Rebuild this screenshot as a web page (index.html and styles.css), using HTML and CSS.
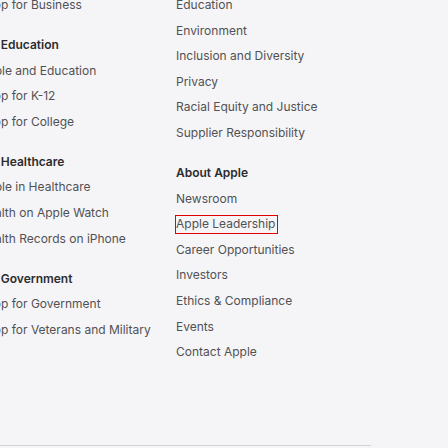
FILE: index.html
```html
<!DOCTYPE html>
<html lang="en">
<head>
<meta charset="utf-8">
<title>Footer directory</title>
<link rel="stylesheet" href="styles.css">
</head>
<body>
<footer class="footer">
  <div class="directory">
    <div class="column column-left">
      <section class="section">
        <ul class="list">
          <li><a href="#">Shop for Business</a></li>
        </ul>
      </section>
      <section class="section">
        <h3 class="title">For Education</h3>
        <ul class="list">
          <li><a href="#">Apple and Education</a></li>
          <li><a href="#">Shop for K-12</a></li>
          <li><a href="#">Shop for College</a></li>
        </ul>
      </section>
      <section class="section">
        <h3 class="title">For Healthcare</h3>
        <ul class="list">
          <li><a href="#">Apple in Healthcare</a></li>
          <li><a href="#">Health on Apple Watch</a></li>
          <li><a href="#">Health Records on iPhone</a></li>
        </ul>
      </section>
      <section class="section">
        <h3 class="title">For Government</h3>
        <ul class="list">
          <li><a href="#">Shop for Government</a></li>
          <li><a href="#">Shop for Veterans and Military</a></li>
        </ul>
      </section>
    </div>
    <div class="column column-right">
      <section class="section">
        <ul class="list">
          <li><a href="#">Education</a></li>
          <li><a href="#">Environment</a></li>
          <li><a href="#">Inclusion and Diversity</a></li>
          <li><a href="#">Privacy</a></li>
          <li><a href="#">Racial Equity and Justice</a></li>
          <li><a href="#">Supplier Responsibility</a></li>
        </ul>
      </section>
      <section class="section">
        <h3 class="title">About Apple</h3>
        <ul class="list">
          <li><a href="#">Newsroom</a></li>
          <li><a href="#" class="focused">Apple Leadership</a></li>
          <li><a href="#">Career Opportunities</a></li>
          <li><a href="#">Investors</a></li>
          <li><a href="#">Ethics &amp; Compliance</a></li>
          <li><a href="#">Events</a></li>
          <li><a href="#">Contact Apple</a></li>
        </ul>
      </section>
    </div>
  </div>
  <hr class="divider">
</footer>
</body>
</html>
```

FILE: styles.css
```css
html, body {
  margin: 0;
  padding: 0;
  background: #f5f5f7;
}
body {
  font-family: Inter, "Liberation Sans", sans-serif;
  font-size: 12px;
  line-height: 16px;
  color: #515154;
  overflow: hidden;
  height: 448px;
}
.footer {
  margin-top: -3px;
}
.directory {
  display: flex;
  margin-left: -21px;
}
.column-left {
  width: 197px;
}
.column-right {
  width: 200px;
}
.section {
  margin-bottom: 24px;
}
.title {
  margin: 0 0 9.6px;
  font-size: 12px;
  line-height: 16px;
  font-weight: 600;
  color: #2c2c2e;
}
.list {
  list-style: none;
  margin: 0;
  padding: 0;
}
.list li {
  margin-bottom: 9.6px;
}
.list li:last-child {
  margin-bottom: 0;
}
.list a {
  color: #515154;
  text-decoration: none;
}
.focused {
  display: inline-block;
  padding: 0 2px 1px 0;
  margin-bottom: -1px;
  vertical-align: top;
  outline: 1px solid #e30000;
}
.divider {
  border: 0;
  border-top: 1px solid #d2d2d7;
  width: 371px;
  margin: 61px 0 0;
}
```
